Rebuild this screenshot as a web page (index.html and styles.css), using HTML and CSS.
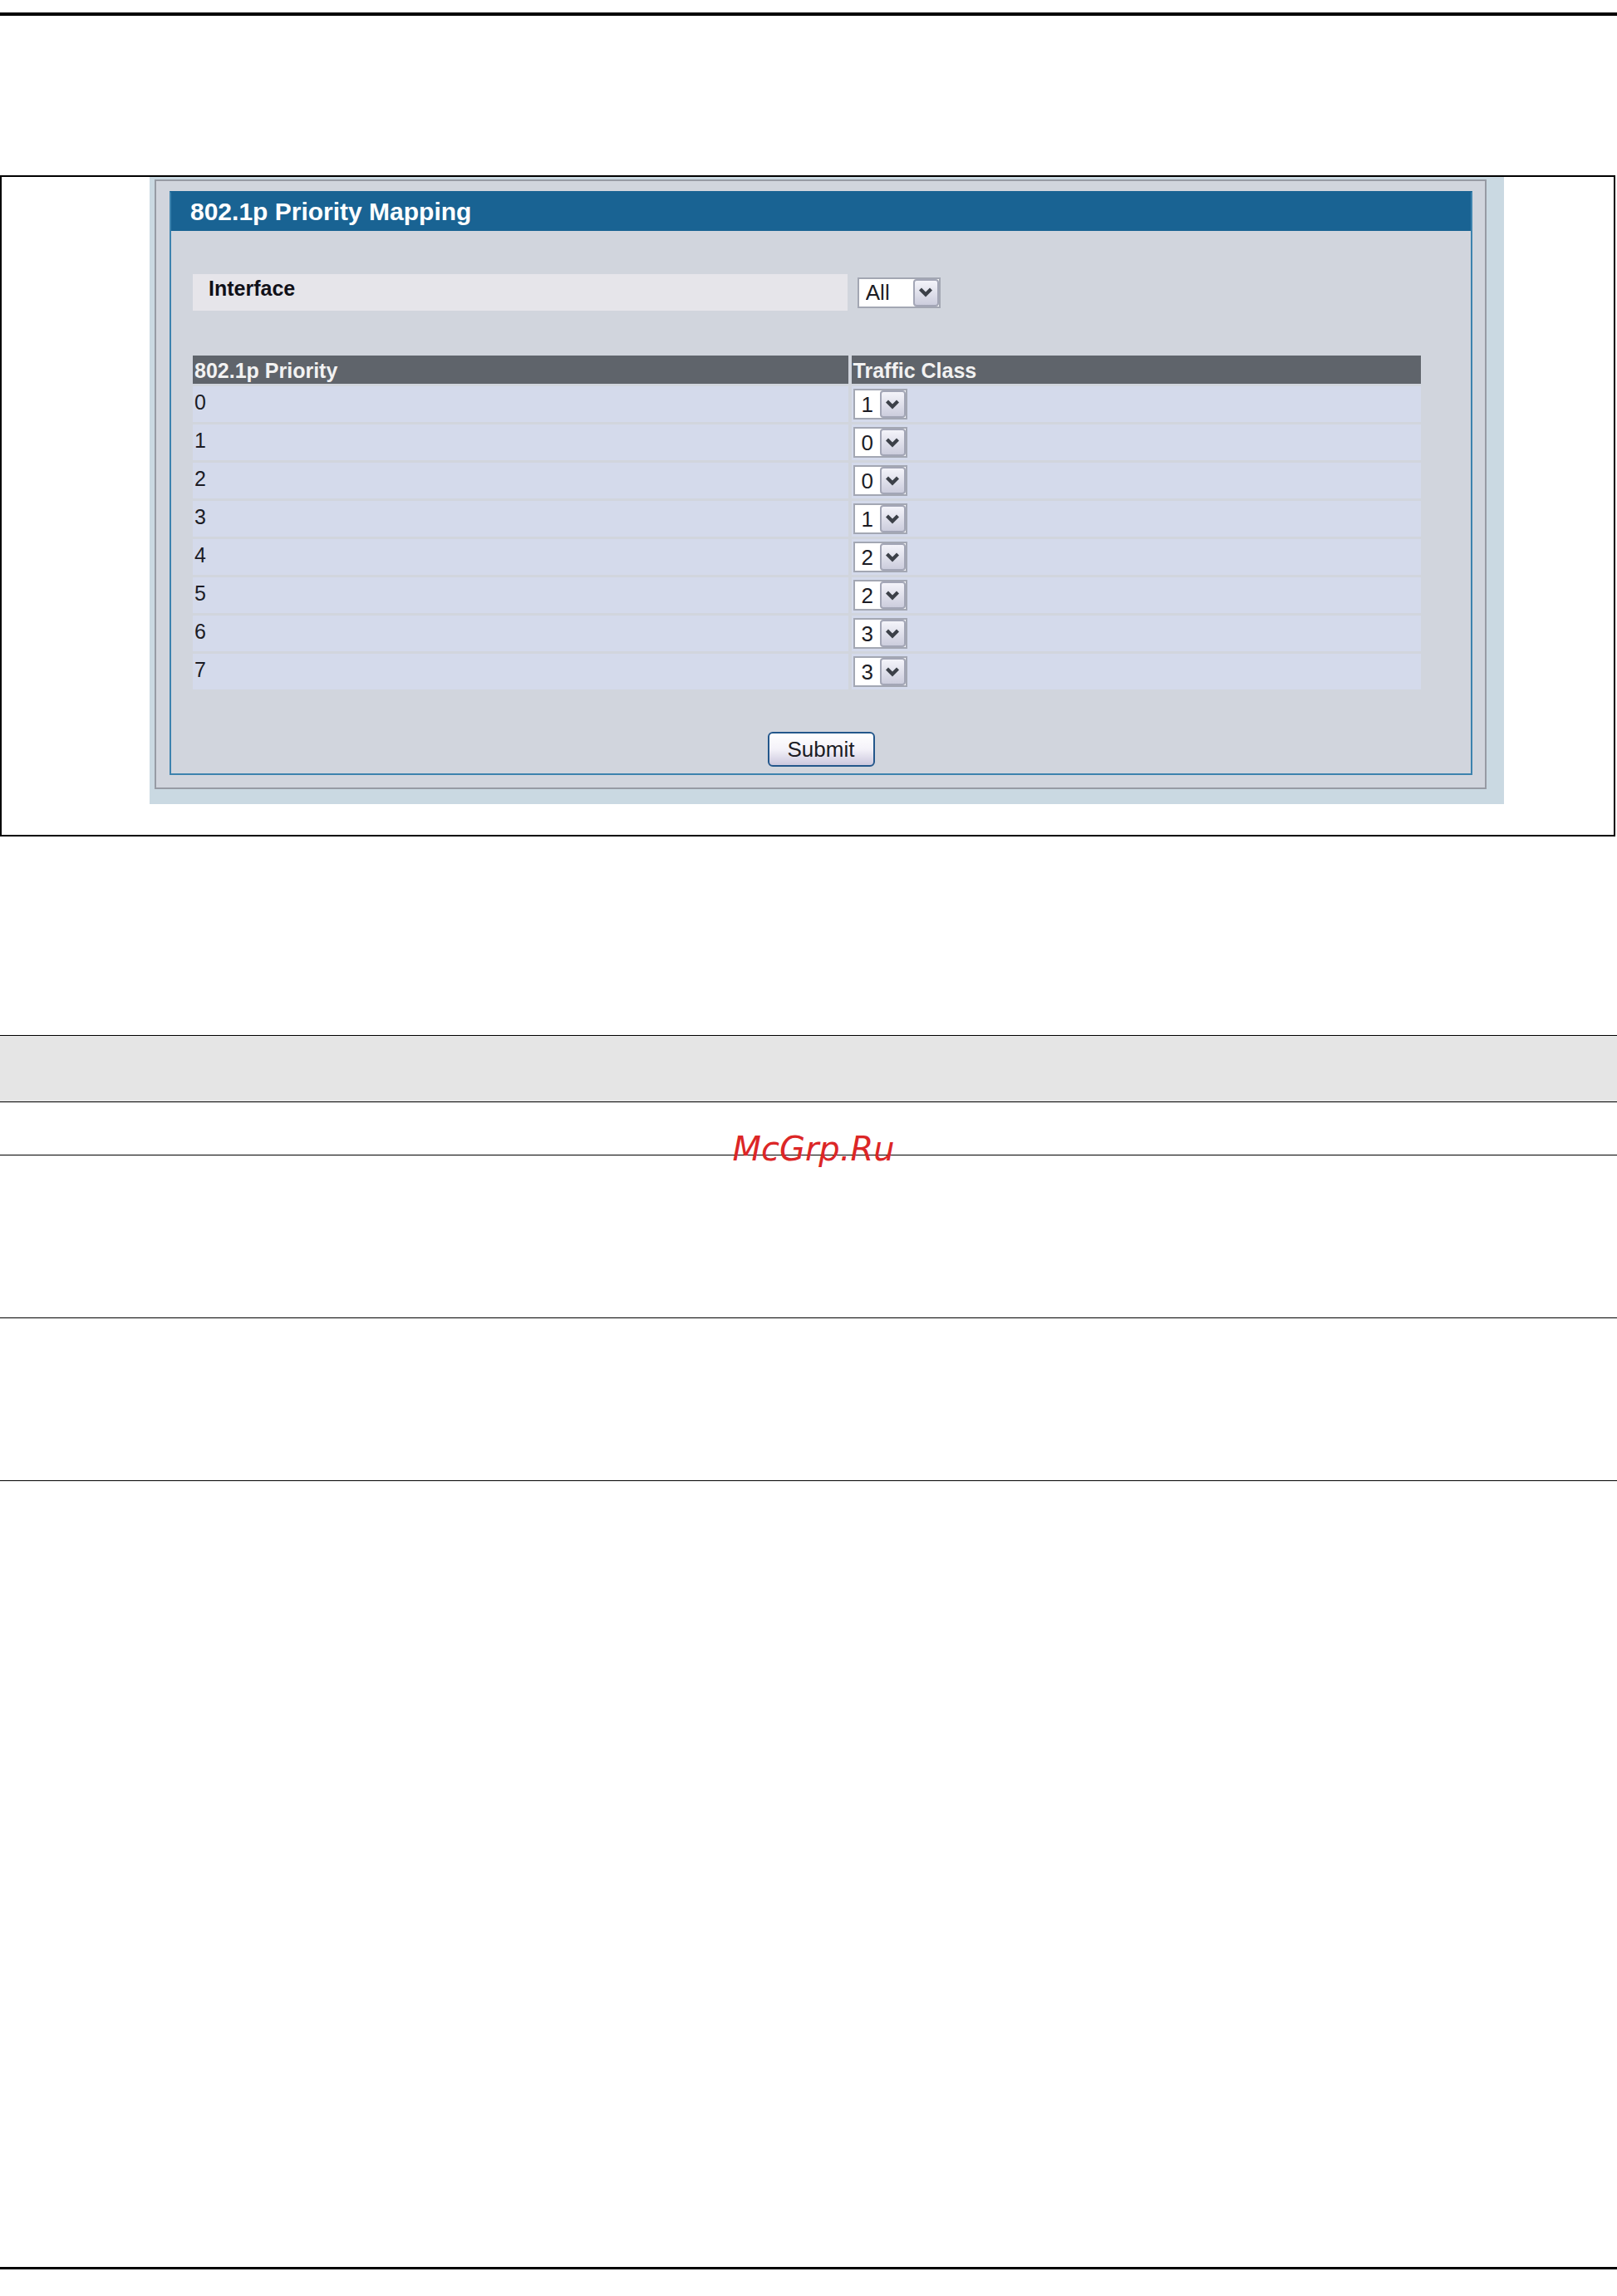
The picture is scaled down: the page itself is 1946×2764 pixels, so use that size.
FILE: index.html
```html
<!DOCTYPE html>
<html lang="en">
<head>
  <meta charset="UTF-8">
  <meta name="viewport" content="width=device-width, initial-scale=1.0">
  <title>802.1p Priority Mapping</title>
  <link rel="stylesheet" href="styles.css">
</head>
<body>

<!-- Arrow shared by all the drop-downs -->
<svg class="sprite" width="0" height="0" aria-hidden="true">
  <symbol id="arrow" viewBox="0 0 18 12">
    <path d="M1 3.5 4 0.5 9 5.5 14 0.5 17 3.5 9 11.5Z" fill="#3c4048"/>
  </symbol>
</svg>

<div class="page">
  <div class="figure">
    <div class="screen">
      <div class="outer-box">
        <form class="panel">
          <h2 class="panel-title">802.1p Priority Mapping</h2>

          <div class="interface-row">
            <label class="interface-label" for="interface">Interface</label>
            <div class="drop drop-wide">
              <select id="interface"><option>All</option></select>
              <span class="drop-arrow"><svg><use href="#arrow"/></svg></span>
            </div>
          </div>

          <div class="table-wrap">
            <table class="mapping">
              <thead>
                <tr><th class="col-priority">802.1p Priority</th><th>Traffic Class</th></tr>
              </thead>
              <tbody>
                <tr>
                  <td><label for="p0">0</label></td>
                  <td><div class="drop"><select id="p0"><option>0</option><option selected>1</option><option>2</option><option>3</option></select><span class="drop-arrow"><svg><use href="#arrow"/></svg></span></div></td>
                </tr>
                <tr>
                  <td><label for="p1">1</label></td>
                  <td><div class="drop"><select id="p1"><option selected>0</option><option>1</option><option>2</option><option>3</option></select><span class="drop-arrow"><svg><use href="#arrow"/></svg></span></div></td>
                </tr>
                <tr>
                  <td><label for="p2">2</label></td>
                  <td><div class="drop"><select id="p2"><option selected>0</option><option>1</option><option>2</option><option>3</option></select><span class="drop-arrow"><svg><use href="#arrow"/></svg></span></div></td>
                </tr>
                <tr>
                  <td><label for="p3">3</label></td>
                  <td><div class="drop"><select id="p3"><option>0</option><option selected>1</option><option>2</option><option>3</option></select><span class="drop-arrow"><svg><use href="#arrow"/></svg></span></div></td>
                </tr>
                <tr>
                  <td><label for="p4">4</label></td>
                  <td><div class="drop"><select id="p4"><option>0</option><option>1</option><option selected>2</option><option>3</option></select><span class="drop-arrow"><svg><use href="#arrow"/></svg></span></div></td>
                </tr>
                <tr>
                  <td><label for="p5">5</label></td>
                  <td><div class="drop"><select id="p5"><option>0</option><option>1</option><option selected>2</option><option>3</option></select><span class="drop-arrow"><svg><use href="#arrow"/></svg></span></div></td>
                </tr>
                <tr>
                  <td><label for="p6">6</label></td>
                  <td><div class="drop"><select id="p6"><option>0</option><option>1</option><option>2</option><option selected>3</option></select><span class="drop-arrow"><svg><use href="#arrow"/></svg></span></div></td>
                </tr>
                <tr>
                  <td><label for="p7">7</label></td>
                  <td><div class="drop"><select id="p7"><option>0</option><option>1</option><option>2</option><option selected>3</option></select><span class="drop-arrow"><svg><use href="#arrow"/></svg></span></div></td>
                </tr>
              </tbody>
            </table>
          </div>

          <div class="actions">
            <button type="button" class="submit">Submit</button>
          </div>
        </form>
      </div>
    </div>
  </div>

  <!-- Empty field list under the figure -->
  <div class="fields">
    <div class="field-head"></div>
    <div class="field-row short"></div>
    <div class="field-row"></div>
    <div class="field-row"></div>
    <div class="watermark">McGrp.Ru</div>
  </div>
</div>

</body>
</html>
```
FILE: styles.css
```css
/* General reset */
* {
  margin: 0;
  padding: 0;
  box-sizing: border-box;
}

body {
  font-family: "Liberation Sans", Arial, sans-serif;
  font-size: 25px;
  background-color: #fff;
  color: #1c1c24;
}

.sprite {
  position: absolute;
}

/* Page with a rule at the top and the bottom */
.page {
  display: flex;
  flex-direction: column;
  min-height: calc(100vh - 47px);
  margin-top: 15px;
  border-top: 4px solid #000;
  border-bottom: 3px solid #000;
}

/* Framed figure */
.figure {
  margin: 192px 2px 0 0;
  padding: 0 132px 37px 178px;
  border: 2px solid #000;
}

.screen {
  padding: 3px 21px 18px 6px;
  background-color: #cad9e2;
}

.outer-box {
  padding: 12px 15px 15px 16px;
  border: 2px solid #979ba4;
  background-color: #d1d5dd;
}

.panel {
  padding-bottom: 8px;
  border: 2px solid #3d83ae;
  border-top-color: #196393;
}

.panel-title {
  padding-left: 23px;
  background-color: #196393;
  color: #fff;
  font-size: 30px;
  line-height: 46px;
}

/* Interface row */
.interface-row {
  display: flex;
  align-items: center;
  gap: 12px;
  margin: 52px 60px 0 26px;
}

.interface-label {
  width: 53.3%;
  height: 44px;
  padding-left: 19px;
  background-color: #e6e5ea;
  color: #101018;
  font-weight: bold;
  line-height: 34px;
}

/* Drop-downs */
.drop {
  position: relative;
  width: 65px;
  height: 37px;
}

.drop-wide {
  width: 100px;
}

.drop select {
  display: block;
  width: 100%;
  height: 100%;
  padding-left: 8px;
  border: 2px solid #a3a7b3;
  border-radius: 0;
  background-color: #fff;
  color: #1c1c24;
  font-family: inherit;
  font-size: 26px;
  appearance: none;
}

.drop-arrow {
  position: absolute;
  top: 2px;
  right: 2px;
  bottom: 2px;
  display: flex;
  align-items: center;
  justify-content: center;
  width: 31px;
  border: 2px solid #a3a6b6;
  border-radius: 4px;
  background: linear-gradient(#f4f4fa, #cccddd);
  pointer-events: none;
}

.drop-arrow svg {
  width: 18px;
  height: 12px;
}

/* Priority table */
.table-wrap {
  margin: 51px 56px 0 22px;
}

.mapping {
  width: 100%;
  border-collapse: separate;
  border-spacing: 4px 3px;
  table-layout: fixed;
}

.mapping th {
  padding: 3px 2px 1px;
  background-color: #5f646b;
  color: #f2f2f2;
  line-height: 30px;
  text-align: left;
}

.mapping .col-priority {
  width: 53.5%;
}

.mapping td {
  padding: 3px 2px;
  background-color: #d4daeb;
  line-height: 32px;
  vertical-align: top;
}

/* Submit */
.actions {
  margin-top: 48px;
  text-align: center;
}

.submit {
  display: block;
  width: 129px;
  height: 42px;
  margin: 0 auto;
  border: 2px solid #23578b;
  border-radius: 6px;
  background: linear-gradient(#fff, #f4f2f9 50%, #ccc8de);
  color: #1c1c24;
  font-family: inherit;
  font-size: 26px;
}

/* Field list */
.fields {
  position: relative;
  margin-top: 239px;
}

.field-head {
  height: 81px;
  border-top: 1px solid #000;
  border-bottom: 1px solid #000;
  background-color: #e5e5e5;
}

.field-row {
  height: 196px;
  border-bottom: 1px solid #000;
}

.field-row.short {
  height: 64px;
}

.watermark {
  position: absolute;
  top: 114px;
  left: 0;
  right: 0;
  padding-left: 12px;
  color: #dc2626;
  font-family: "DejaVu Sans", sans-serif;
  font-size: 40px;
  font-style: italic;
  line-height: 46px;
  text-align: center;
}
```
